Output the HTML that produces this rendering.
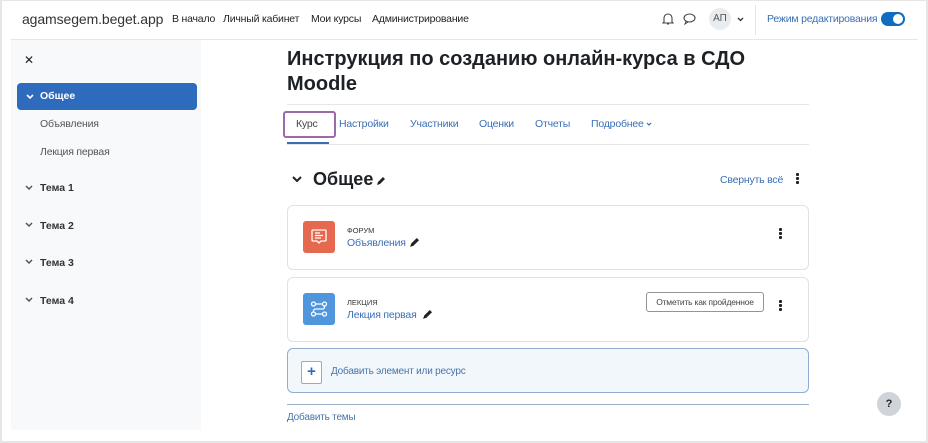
<!DOCTYPE html>
<html><head><meta charset="utf-8"><style>
*{box-sizing:border-box;margin:0;padding:0}
body{width:928px;height:443px;overflow:hidden;background:#fff;font-family:"Liberation Sans","DejaVu Sans",sans-serif;position:relative;color:#1d2125}
.a{position:absolute;white-space:nowrap}
.frame{position:absolute;left:0;top:0;width:928px;height:443px;border:2px solid #e6e6e6;border-top:1px solid #e6e6e6}
.link{color:#3a6fb5}
.nav{font-size:10.5px;color:#1d2125;letter-spacing:-0.2px}
.side{position:absolute;left:11px;top:40px;width:190px;height:390px;background:#f8f9fa}
.sitem{font-size:10.5px;color:#555;letter-spacing:-0.2px}
.tema{font-size:10.5px;font-weight:bold;color:#333}
.card{position:absolute;left:287px;width:522px;border:1px solid #dee2e6;border-radius:6px;background:#fff}
.ico{position:absolute;width:32px;height:32px;border-radius:3px}
.dots{position:absolute;width:3px}
.dots i{display:block;width:3px;height:3px;background:#222;margin-bottom:1px;border-radius:1px}
.t{font-size:10.5px;letter-spacing:-0.2px}
</style></head><body>
<div class="frame"></div>
<div class="a" style="left:22px;top:11px;font-size:14px;color:#333;letter-spacing:-0.1px">agamsegem.beget.app</div>
<div class="a nav" style="left:172px;top:13px">В начало</div>
<div class="a nav" style="left:223px;top:13px">Личный кабинет</div>
<div class="a nav" style="left:311px;top:13px">Мои курсы</div>
<div class="a nav" style="left:372px;top:13px">Администрирование</div>
<svg class="a" style="left:662px;top:12px" width="12" height="14" viewBox="0 0 12 14"><path d="M2 10V6a4 4 0 0 1 8 0v4l1 1H1z M5 12h2" fill="none" stroke="#444" stroke-width="1.1"/></svg>
<svg class="a" style="left:683px;top:13px" width="13" height="12" viewBox="0 0 13 12"><ellipse cx="6.5" cy="5" rx="5.5" ry="4" fill="none" stroke="#444" stroke-width="1.1"/><path d="M3 8.5L2 11l3-2" fill="none" stroke="#444" stroke-width="1"/></svg>
<div class="a" style="left:709px;top:8px;width:22px;height:22px;border-radius:50%;background:#e9ecef;font-size:10px;color:#555;text-align:center;line-height:22px">АП</div>
<svg class="a" style="left:737px;top:17px" width="7" height="5" viewBox="0 0 7 5"><path d="M1 1l2.5 2.5L6 1" fill="none" stroke="#333" stroke-width="1.3"/></svg>
<div class="a" style="left:755px;top:5px;width:1px;height:30px;background:#e3e3e3"></div>
<div class="a link t" style="left:767px;top:13px">Режим редактирования</div>
<div class="a" style="left:881px;top:12px;width:24px;height:14px;border-radius:7px;background:#0f6cbf"></div>
<div class="a" style="left:893px;top:14px;width:10px;height:10px;border-radius:50%;background:#fff"></div>
<div class="a" style="left:11px;top:39px;width:907px;height:1px;background:#e3e6ea"></div>

<div class="side"></div>
<div class="a" style="left:24px;top:53px;font-size:12px;font-weight:bold;color:#222">✕</div>
<div class="a" style="left:17px;top:83px;width:180px;height:27px;background:#2e6bbd;border-radius:4px"></div>
<svg class="a" style="left:26px;top:94px" width="8" height="6" viewBox="0 0 8 6"><path d="M1 1l3 3 3-3" fill="none" stroke="#fff" stroke-width="1.6"/></svg>
<div class="a" style="left:40px;top:90px;font-size:10.5px;font-weight:bold;color:#fff">Общее</div>
<div class="a sitem" style="left:40px;top:118px">Объявления</div>
<div class="a sitem" style="left:40px;top:146px">Лекция первая</div>
<svg class="a" style="left:25px;top:185px" width="8" height="120" viewBox="0 0 8 120"><g fill="none" stroke="#555" stroke-width="1.5"><path d="M1 1l3 3 3-3"/><path d="M1 38l3 3 3-3"/><path d="M1 75l3 3 3-3"/><path d="M1 113l3 3 3-3"/></g></svg>
<div class="a tema" style="left:40px;top:182px">Тема 1</div>
<div class="a tema" style="left:40px;top:220px">Тема 2</div>
<div class="a tema" style="left:40px;top:257px">Тема 3</div>
<div class="a tema" style="left:40px;top:295px">Тема 4</div>

<div class="a" style="left:287px;top:47px;font-size:20px;font-weight:bold;line-height:25px;color:#1d2125">Инструкция по созданию онлайн-курса в СДО<br>Moodle</div>
<div class="a" style="left:287px;top:104px;width:522px;height:1px;background:#e6e6e6"></div>
<div class="a" style="left:283px;top:111px;width:53px;height:27px;border:2px solid #9a6aaa;border-radius:3px"></div>
<div class="a t" style="left:296px;top:118px;color:#444">Курс</div>
<div class="a link t" style="left:339px;top:118px">Настройки</div>
<div class="a link t" style="left:410px;top:118px">Участники</div>
<div class="a link t" style="left:479px;top:118px">Оценки</div>
<div class="a link t" style="left:535px;top:118px">Отчеты</div>
<div class="a link t" style="left:591px;top:118px">Подробнее</div>
<svg class="a" style="left:646px;top:122px" width="6" height="5" viewBox="0 0 6 5"><path d="M1 1l2 2 2-2" fill="none" stroke="#3a6fb5" stroke-width="1.2"/></svg>
<div class="a" style="left:287px;top:142px;width:42px;height:2px;background:#3a6fb5"></div>
<div class="a" style="left:287px;top:144px;width:522px;height:1px;background:#e6e6e6"></div>

<svg class="a" style="left:292px;top:176px" width="10" height="7" viewBox="0 0 10 7"><path d="M1 1l4 4 4-4" fill="none" stroke="#222" stroke-width="2"/></svg>
<div class="a" style="left:313px;top:169px;font-size:18px;font-weight:bold">Общее</div>
<svg class="a" style="left:376px;top:177px" width="9" height="9" viewBox="0 0 9 9"><path d="M1 8l1-3 5-5 2 2-5 5z" fill="#222"/></svg>
<div class="a link t" style="left:720px;top:174px">Свернуть всё</div>
<div class="dots" style="left:796px;top:173px"><i></i><i></i><i></i></div>

<div class="card" style="top:205px;height:65px"></div>
<div class="ico" style="left:303px;top:221px;background:#e6694f"></div>
<svg class="a" style="left:310px;top:228px" width="18" height="18" viewBox="0 0 18 18"><path d="M3 2h12a1 1 0 0 1 1 1v9a1 1 0 0 1-1 1h-4l-2 2-2-2H3a1 1 0 0 1-1-1V3a1 1 0 0 1 1-1z M5 5h5 M5 7.5h8 M5 10h6" fill="none" stroke="#fff" stroke-width="1.3"/></svg>
<div class="a" style="left:347px;top:226px;font-size:7.5px;color:#333">ФОРУМ</div>
<div class="a link t" style="left:347px;top:237px">Объявления</div>
<svg class="a" style="left:409px;top:238px" width="10" height="10" viewBox="0 0 9 9"><path d="M1 8l1-3 5-5 2 2-5 5z" fill="#222"/></svg>
<div class="dots" style="left:779px;top:228px"><i></i><i></i><i></i></div>

<div class="card" style="top:277px;height:65px"></div>
<div class="ico" style="left:303px;top:293px;background:#4f96dd"></div>
<svg class="a" style="left:309px;top:299px" width="20" height="20" viewBox="0 0 20 20"><g fill="none" stroke="#fff" stroke-width="1.3"><circle cx="4.5" cy="5" r="2"/><circle cx="15.5" cy="5" r="2"/><circle cx="4.5" cy="15" r="2"/><circle cx="15.5" cy="15" r="2"/><path d="M6.5 5h7 M15.5 7v1a2 2 0 0 1-2 2h-7a2 2 0 0 0-2 2v1 M6.5 15h7"/></g></svg>
<div class="a" style="left:347px;top:298px;font-size:7.5px;color:#333">ЛЕКЦИЯ</div>
<div class="a link t" style="left:347px;top:309px">Лекция первая</div>
<svg class="a" style="left:422px;top:310px" width="10" height="10" viewBox="0 0 9 9"><path d="M1 8l1-3 5-5 2 2-5 5z" fill="#222"/></svg>
<div class="a" style="left:646px;top:292px;width:118px;height:20px;border:1px solid #8f959a;border-radius:3px;font-size:8.5px;letter-spacing:-0.2px;color:#444;text-align:center;line-height:18px">Отметить как пройденное</div>
<div class="dots" style="left:779px;top:300px"><i></i><i></i><i></i></div>

<div class="a" style="left:287px;top:348px;width:522px;height:45px;border:1px solid #8fadd0;border-radius:6px;background:#f2f7fc"></div>
<div class="a" style="left:301px;top:361px;width:21px;height:23px;border:1px solid #8fadd0;background:#fff;border-radius:2px;color:#2e6bbd;font-weight:bold;font-size:15px;text-align:center;line-height:20px">+</div>
<div class="a" style="left:331px;top:366px;font-size:10px;color:#4a74a8;letter-spacing:-0.2px">Добавить элемент или ресурс</div>
<div class="a" style="left:287px;top:404px;width:522px;height:1px;background:#9bb0c8"></div>
<div class="a" style="left:287px;top:412px;font-size:10px;color:#4a74a8;letter-spacing:-0.2px">Добавить темы</div>
<div class="a" style="left:877px;top:392px;width:24px;height:24px;border-radius:50%;background:#ced4da;font-size:11px;font-weight:bold;text-align:center;line-height:24px;color:#222">?</div>
</body></html>
